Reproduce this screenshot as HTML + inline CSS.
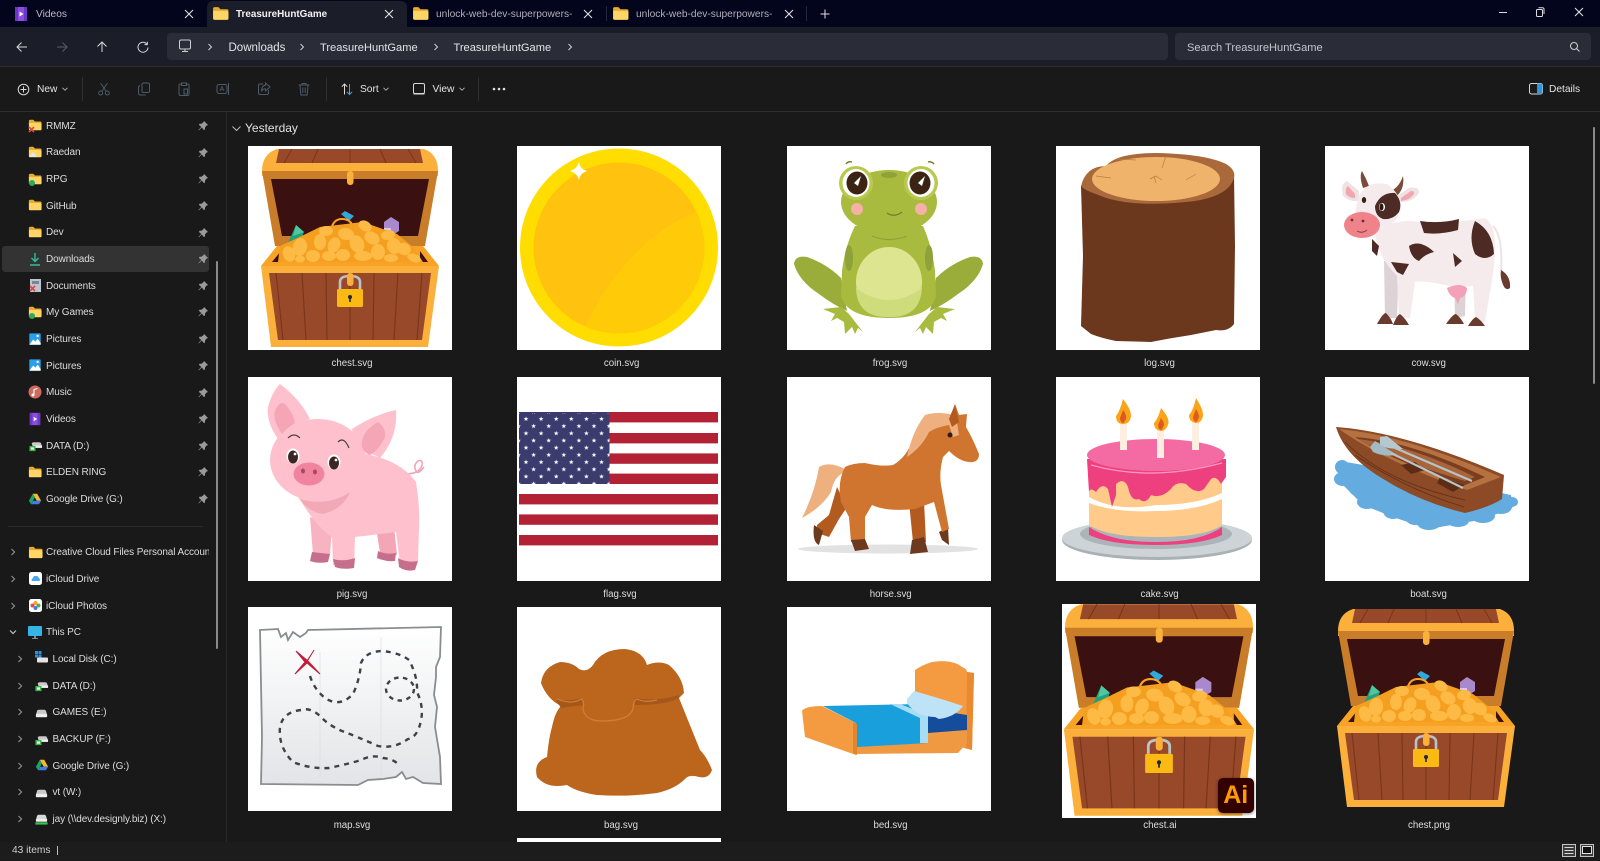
<!DOCTYPE html>
<html><head><meta charset="utf-8"><title>TreasureHuntGame</title>
<style>
html,body{margin:0;padding:0;width:1600px;height:860px;overflow:hidden;background:#191919;font-family:"Liberation Sans",sans-serif;color:#e4e4e4}
.a{position:absolute}
.t{position:absolute;white-space:nowrap;font-size:11px;line-height:20px;height:20px}
.s{position:absolute;white-space:nowrap;font-size:10px;letter-spacing:-.1px;line-height:26px;height:26px;color:#dcdcdc;margin-top:1px}
.l{position:absolute;width:204px;text-align:center;font-size:9.7px;line-height:16px;color:#dedede;margin-top:2px}
.c{position:absolute;width:204px;height:204px;background:#fff;overflow:hidden}
.c svg{display:block}
.i{position:absolute;overflow:visible}
.p{position:absolute;left:197px;width:12px;height:12px;overflow:visible}
</style></head>
<body>
<svg width="0" height="0" style="position:absolute">
<defs>
<symbol id="folder" viewBox="0 0 16 16"><path d="M1 3.5Q1 2 2.5 2H6L8 4H14Q15.5 4 15.5 5.5V6H1Z" fill="#e8a92e"/><path d="M1 5.5H14Q15.5 5.5 15.5 7V12.5Q15.5 14 14 14H2.5Q1 14 1 12.5Z" fill="#ffd666"/></symbol>
<symbol id="pin" viewBox="0 0 12 12"><path d="M7 1L11 5L9.5 5.6L8 7.5L8 9.5L6.8 10L4.8 7.5L1.8 10.4L1.4 10L4.3 7L2 5L2.4 3.8L4.4 3.8L6.4 2.3Z" fill="#9a9a9a"/></symbol>
<symbol id="video" viewBox="0 0 16 16"><rect x="2" y="1" width="12" height="14" rx="1" fill="#8a4fe0"/><rect x="2" y="1" width="3" height="14" fill="#6f36c4"/><rect x="11" y="1" width="3" height="14" fill="#6f36c4"/><path d="M6.5 5.5L10.5 8L6.5 10.5Z" fill="#fff"/></symbol>
<symbol id="pics" viewBox="0 0 16 16"><rect x="1.5" y="1.5" width="13" height="13" rx="1" fill="#2b9fe8"/><path d="M1.5 14.5L6 8.5L8.5 11L11 7.5L14.5 12.5V14.5Z" fill="#fff"/><circle cx="11" cy="4.5" r="1.4" fill="#fff"/></symbol>
<symbol id="drive" viewBox="0 0 16 16"><path d="M5.5 2H10.5L15 10H10Z" fill="#f7bb2a"/><path d="M5.5 2L1 10L3.5 14L8 6Z" fill="#1fa463"/><path d="M3.5 14H12.5L15 10H6Z" fill="#3f7ee8"/></symbol>
<symbol id="disk" viewBox="0 0 16 16"><path d="M3 7Q3.5 5 5 5H11Q12.5 5 13 7L14 10.5H2Z" fill="#c9c9c9"/><rect x="2" y="9.5" width="12" height="3.5" rx="1" fill="#efefef"/></symbol>
<symbol id="gdisk" viewBox="0 0 16 16"><path d="M4 6Q4.5 4.5 6 4.5H12Q13.5 4.5 14 6L15 9H5Z" fill="#c9c9c9"/><rect x="6" y="8" width="9" height="2.6" fill="#eee"/><rect x="1.5" y="8.5" width="6.5" height="5.5" fill="#37b24d"/><rect x="3" y="10" width="3.5" height="2.5" fill="#dff5e3"/></symbol>
<symbol id="net" viewBox="0 0 16 16"><path d="M3 6Q3.5 4 5 4H11Q12.5 4 13 6L14 9.5H2Z" fill="#d7d7d7"/><rect x="2" y="8.5" width="12" height="3" rx="1" fill="#eee"/><rect x="1.5" y="12" width="13" height="2.5" fill="#35c24d"/></symbol>
<symbol id="chev" viewBox="0 0 8 8"><path d="M2.5 1L5.5 4L2.5 7" fill="none" stroke="#d0d0d0" stroke-width="1"/></symbol>
<symbol id="schev" viewBox="0 0 8 8"><path d="M2.5 1L5.5 4L2.5 7" fill="none" stroke="#8c8c8c" stroke-width="1.2"/></symbol>
<symbol id="dn" viewBox="0 0 8 8"><path d="M1.5 2.8L4 5.3L6.5 2.8" fill="none" stroke="#b5b5b5" stroke-width="0.9"/></symbol>
<symbol id="x" viewBox="0 0 10 10"><path d="M1 1L9 9M9 1L1 9" fill="none" stroke="#e8e8e8" stroke-width="1"/></symbol>
<pattern id="stars" x="1.5" y="37.5" width="15.1" height="14.4" patternUnits="userSpaceOnUse"><polygon points="7.5,2 8.1,3.6 9.9,3.6 8.5,4.7 9,6.4 7.5,5.4 6,6.4 6.5,4.7 5.1,3.6 6.9,3.6" fill="#fff"/><polygon points="15.1,9.2 15.7,10.8 17.5,10.8 16.1,11.9 16.6,13.6 15.1,12.6 13.6,13.6 14.1,11.9 12.7,10.8 14.5,10.8" fill="#fff"/><polygon points="0,9.2 .6,10.8 2.4,10.8 1,11.9 1.5,13.6 0,12.6 -1.5,13.6 -1,11.9 -2.4,10.8 -.6,10.8" fill="#fff"/></pattern>
<clipPath id="coinclip"><circle cx="102" cy="102" r="85.5"/></clipPath>
<symbol id="chest" viewBox="0 0 204 204" overflow="visible">
<path d="M14 25Q14 8 29 3H176Q190 8 190 25V30H14Z" fill="#fbb03b"/>
<path d="M28 17L31 3H172L175 17Z" fill="#97492a"/>
<path d="M44 3L36 17M70 3L64 17M102 3V17M132 3L138 17M160 3L168 17" stroke="#7a3519" stroke-width="1"/>
<path d="M14 25H190L177 100H27Z" fill="#c97d29"/>
<path d="M23 33H181L170 90H34Z" fill="#3a1010"/>
<rect x="99" y="25" width="6.5" height="14" rx="3" fill="#fbb03b"/>
<path d="M29 100H175L191 120H13Z" fill="#f9a326"/>
<path d="M33 105L24 116H32ZM172 105L180 116H172Z" fill="#3a1010"/>
<path d="M40 97L48 79L56 86L50 102L40 104Z" fill="#21a27a"/><path d="M45 90L48 79L56 86Z" fill="#4fc7a2"/>
<path d="M136 76L143 71L151 76L151 85L143 90L136 85Z" fill="#a988cc"/><path d="M136 82L143 82L143 90L136 85Z" fill="#d9c8ea"/>
<path d="M93 68L97 65L106 70L101 75Z" fill="#2fa9dc"/>
<path d="M83 84Q85 73 94 73Q104 73 106 84" fill="none" stroke="#f9a326" stroke-width="2"/>
<path d="M32 100Q50 92 72 81L115 76L149 88L165 101L175 116H30Z" fill="#f59f20"/>
<g fill="#fdbb45">
<ellipse cx="41" cy="108" rx="6" ry="8" transform="rotate(-20 41 108)"/><ellipse cx="52" cy="101" rx="7" ry="9" transform="rotate(10 52 101)"/><ellipse cx="65" cy="110" rx="7" ry="6"/><ellipse cx="72" cy="96" rx="6" ry="8"/><ellipse cx="78" cy="85" rx="7" ry="5"/><ellipse cx="81" cy="110" rx="7" ry="5"/><ellipse cx="86" cy="99" rx="6" ry="8" transform="rotate(25 86 99)"/><ellipse cx="95" cy="109" rx="7" ry="6"/><ellipse cx="98" cy="88" rx="8" ry="6" transform="rotate(10 98 88)"/><ellipse cx="109" cy="98" rx="7" ry="9" transform="rotate(-25 109 98)"/><ellipse cx="117" cy="80" rx="7" ry="5" transform="rotate(30 117 80)"/><ellipse cx="124" cy="92" rx="8" ry="6" transform="rotate(30 124 92)"/><ellipse cx="115" cy="110" rx="9" ry="5"/><ellipse cx="130" cy="106" rx="7" ry="8"/><ellipse cx="140" cy="89" rx="7" ry="5" transform="rotate(-10 140 89)"/><ellipse cx="146" cy="100" rx="7" ry="8" transform="rotate(-15 146 100)"/><ellipse cx="156" cy="103" rx="7" ry="6" transform="rotate(30 156 103)"/><ellipse cx="143" cy="112" rx="7" ry="4"/><ellipse cx="166" cy="112" rx="7" ry="4" transform="rotate(20 166 112)"/><ellipse cx="52" cy="113" rx="5" ry="3.5"/>
</g>
<path d="M13 120H191L180 201H23Z" fill="#fbb03b"/>
<path d="M21 127H183L174 194H30Z" fill="#97492a"/>
<path d="M28 127L35 194M54 127L58 194M78 127L79 194M102 127V194M126 127L125 194M150 127L146 194M174 127L169 194" stroke="#7a3519" stroke-width="1.1"/>
<path d="M92 143V136Q92 130 102 130Q112 130 112 136V143" fill="none" stroke="#bcc2c9" stroke-width="2.6"/>
<rect x="99" y="127" width="6.5" height="13" rx="3" fill="#fbb03b"/>
<rect x="89" y="143" width="26" height="18" rx="1.5" fill="#fbb914"/>
<circle cx="102" cy="151" r="2" fill="#26262e"/><rect x="101.2" y="151" width="1.6" height="5" fill="#26262e"/>
</symbol>
</defs>
</svg>

<!-- tab bar -->
<div class="a" style="left:0;top:0;width:1600px;height:27px;background:#02051b"></div>
<div class="a" style="left:207px;top:1px;width:200px;height:26px;background:#1b1e29;border-radius:6px 6px 0 0"></div>
<svg class="i" style="left:13px;top:6px" width="16" height="16"><use href="#video"/></svg>
<div class="t" style="left:36px;top:5px;color:#bdbdc4;font-size:10.2px">Videos</div>
<svg class="i" style="left:184px;top:9px" width="10" height="10"><use href="#x"/></svg>
<svg class="i" style="left:212px;top:5px" width="17" height="17"><use href="#folder"/></svg>
<div class="t" style="left:236px;top:5px;font-weight:bold;font-size:9.9px;color:#f2f2f2">TreasureHuntGame</div>
<svg class="i" style="left:384px;top:9px" width="10" height="10"><use href="#x"/></svg>
<svg class="i" style="left:412px;top:5px" width="17" height="17"><use href="#folder"/></svg>
<div class="t" style="left:436px;top:5px;color:#aeb0b8;font-size:10.2px;width:136px;overflow:hidden">unlock-web-dev-superpowers-</div>
<svg class="i" style="left:583px;top:9px" width="10" height="10"><use href="#x"/></svg>
<div class="a" style="left:606px;top:6px;width:1px;height:15px;background:#24263a"></div>
<svg class="i" style="left:612px;top:5px" width="17" height="17"><use href="#folder"/></svg>
<div class="t" style="left:636px;top:5px;color:#aeb0b8;font-size:10.2px;width:136px;overflow:hidden">unlock-web-dev-superpowers-</div>
<svg class="i" style="left:784px;top:9px" width="10" height="10"><use href="#x"/></svg>
<div class="a" style="left:806px;top:6px;width:1px;height:15px;background:#24263a"></div>
<svg class="i" style="left:820px;top:9px" width="10" height="10"><path d="M5 .5V9.5M.5 5H9.5" stroke="#e0e0e0" fill="none"/></svg>
<svg class="i" style="left:1498px;top:7px" width="10" height="10"><path d="M1 5.5H9" stroke="#dcdcdc" stroke-width="1" fill="none"/></svg>
<svg class="i" style="left:1535px;top:7px" width="10" height="10"><rect x="1.5" y="2.5" width="6" height="7" rx="1" fill="none" stroke="#dcdcdc"/><path d="M3.5 .7H7.5Q9 .7 9 2V7" fill="none" stroke="#dcdcdc"/></svg>
<svg class="i" style="left:1574px;top:7px" width="10" height="10"><use href="#x"/></svg>

<!-- nav -->
<div class="a" style="left:0;top:27px;width:1600px;height:39px;background:#1b1e29"></div>
<div class="a" style="left:0;top:66px;width:1600px;height:1px;background:#2e2e2e"></div>
<div class="a" style="left:167px;top:33px;width:1001px;height:27px;background:#2a2d38;border-radius:4px"></div>
<div class="a" style="left:1175px;top:33px;width:416px;height:27px;background:#2a2d38;border-radius:4px"></div>
<svg class="i" style="left:16px;top:41px" width="12" height="12"><path d="M11 6H1M5.5 1.5L1 6L5.5 10.5" fill="none" stroke="#d8d8d8"/></svg>
<svg class="i" style="left:56px;top:41px" width="12" height="12"><path d="M1 6H11M6.5 1.5L11 6L6.5 10.5" fill="none" stroke="#5a5d66"/></svg>
<svg class="i" style="left:96px;top:41px" width="12" height="12"><path d="M6 11V1M1.5 5.5L6 1L10.5 5.5" fill="none" stroke="#d8d8d8"/></svg>
<svg class="i" style="left:137px;top:41px" width="12" height="12"><path d="M10 3.2A5 5 0 1 0 11 6.5M10.3 .8V3.6H7.5" fill="none" stroke="#d8d8d8"/></svg>
<svg class="i" style="left:178px;top:39px" width="14" height="14"><rect x="1.5" y="1" width="11" height="9" rx="1.5" fill="none" stroke="#d0d0d0"/><path d="M4 12.5H10M7 10V12.5" stroke="#d0d0d0" fill="none"/></svg>
<svg class="i" style="left:206px;top:43px" width="8" height="8"><use href="#chev"/></svg>
<div class="t" style="left:228.5px;top:37.5px;font-size:11.5px;color:#e4e4e6">Downloads</div>
<svg class="i" style="left:298px;top:43px" width="8" height="8"><use href="#chev"/></svg>
<div class="t" style="left:320px;top:37.5px;color:#e4e4e6;font-size:11.1px">TreasureHuntGame</div>
<svg class="i" style="left:432px;top:43px" width="8" height="8"><use href="#chev"/></svg>
<div class="t" style="left:453.5px;top:37.5px;color:#e4e4e6;font-size:11.1px">TreasureHuntGame</div>
<svg class="i" style="left:565.5px;top:43px" width="8" height="8"><use href="#chev"/></svg>
<div class="t" style="left:1187px;top:37.5px;color:#c4c5ca;font-size:11.1px">Search TreasureHuntGame</div>
<svg class="i" style="left:1569px;top:41px" width="12" height="12"><circle cx="5" cy="5" r="3.5" fill="none" stroke="#c8c8c8" stroke-width="1.1"/><path d="M7.5 7.5L10.5 10.5" stroke="#c8c8c8" stroke-width="1.1"/></svg>

<!-- toolbar -->
<div class="a" style="left:0;top:111px;width:1600px;height:1px;background:#2e2e2e"></div>
<svg class="i" style="left:17px;top:83px" width="13" height="13"><circle cx="6.5" cy="6.5" r="5.3" fill="none" stroke="#d8d8d8"/><path d="M6.5 3.5V9.5M3.5 6.5H9.5" stroke="#d8d8d8"/></svg>
<div class="t" style="left:37px;top:80px;font-size:10.2px">New</div>
<svg class="i" style="left:61px;top:85px" width="8" height="8"><use href="#dn"/></svg>
<div class="a" style="left:82px;top:77px;width:1px;height:24px;background:#2f2f2f"></div>
<svg class="i" style="left:97px;top:82px" width="14" height="14"><path d="M3.5 1L9 9M10.5 1L5 9" stroke="#4d5a68" fill="none"/><circle cx="3.7" cy="11" r="2" fill="none" stroke="#4d5a68"/><circle cx="10.3" cy="11" r="2" fill="none" stroke="#4d5a68"/></svg>
<svg class="i" style="left:137px;top:82px" width="14" height="14"><rect x="5" y="1" width="7.5" height="9.5" rx="1.5" fill="none" stroke="#4d5a68"/><path d="M3 3.5Q1.5 4 1.5 5.5V11Q1.5 13 3.5 13H8.5" fill="none" stroke="#4d5a68"/></svg>
<svg class="i" style="left:177px;top:82px" width="14" height="14"><rect x="2" y="2" width="10" height="11.5" rx="1.5" fill="none" stroke="#4d5a68"/><rect x="4.5" y="1" width="5" height="2.5" fill="#191919" stroke="#4d5a68"/><rect x="7" y="7" width="3.5" height="5" fill="none" stroke="#4d5a68"/></svg>
<svg class="i" style="left:216px;top:82px" width="14" height="14"><rect x="1" y="2.5" width="10" height="9" rx="2" fill="none" stroke="#4d5a68"/><path d="M12.5 1V13" stroke="#4d5a68"/><path d="M4 9L6 4.5L8 9M4.8 7.5H7.2" stroke="#4d5a68" fill="none" stroke-width=".8"/></svg>
<svg class="i" style="left:257px;top:82px" width="14" height="14"><path d="M6 2H3Q1.5 2 1.5 3.5V11Q1.5 12.5 3 12.5H10Q11.5 12.5 11.5 11V8" fill="none" stroke="#4d5a68"/><path d="M8.5 1L13 5L8.5 9V6.8Q5.5 6.8 4.5 9.5Q4.5 3.5 8.5 3.2Z" fill="none" stroke="#4d5a68"/></svg>
<svg class="i" style="left:297px;top:82px" width="14" height="14"><path d="M1.5 3H12.5M5 3V1.5H9V3M3 3L3.8 13H10.2L11 3M5.8 5.5V11M8.2 5.5V11" fill="none" stroke="#4d5a68"/></svg>
<div class="a" style="left:326px;top:77px;width:1px;height:24px;background:#2f2f2f"></div>
<svg class="i" style="left:341px;top:83px" width="12" height="12"><path d="M3.5 11.5V1M.8 3.7L3.5 1L6.2 3.7" fill="none" stroke="#dcdcdc"/><path d="M8.5 1V11.5M5.8 8.8L8.5 11.5L11.2 8.8" fill="none" stroke="#4aa3dd"/></svg>
<div class="t" style="left:360px;top:80px;font-size:10.2px">Sort</div>
<svg class="i" style="left:382px;top:85px" width="8" height="8"><use href="#dn"/></svg>
<svg class="i" style="left:412px;top:82px" width="14" height="14"><rect x="1.5" y="1.5" width="11" height="10" rx="1.5" fill="none" stroke="#d8d8d8"/><path d="M1.5 11.5H12.5V12.5H1.5Z" fill="#d8d8d8"/></svg>
<div class="t" style="left:432.5px;top:80px;font-size:10.2px">View</div>
<svg class="i" style="left:458px;top:85px" width="8" height="8"><use href="#dn"/></svg>
<div class="a" style="left:478px;top:77px;width:1px;height:24px;background:#2f2f2f"></div>
<svg class="i" style="left:492px;top:87px" width="14" height="4"><circle cx="2" cy="2" r="1.3" fill="#e0e0e0"/><circle cx="7" cy="2" r="1.3" fill="#e0e0e0"/><circle cx="12" cy="2" r="1.3" fill="#e0e0e0"/></svg>
<svg class="i" style="left:1529px;top:83px" width="14" height="12"><rect x=".5" y=".5" width="13" height="10.5" rx="2" fill="none" stroke="#d8d8d8"/><path d="M8 .5H11.5Q13.5 .5 13.5 2.5V9Q13.5 11 11.5 11H8Z" fill="#3296d4"/></svg>
<div class="t" style="left:1549px;top:80px;font-size:10.2px">Details</div>

<!-- sidebar -->
<div class="a" style="left:226px;top:112px;width:1px;height:730px;background:#292929"></div>
<div class="a" style="left:2px;top:246px;width:207px;height:26px;background:#333;border-radius:3px"></div>
<div class="a" style="left:216px;top:261px;width:2px;height:388px;background:#8a8a8a;border-radius:1px"></div>
<div class="a" style="left:8px;top:526px;width:195px;height:1px;background:#2b2b2b"></div>

<svg class="i" style="left:28px;top:118px" width="14" height="14"><use href="#folder"/><path d="M1 9L6 14M6 9L1 14" stroke="#e0463c" stroke-width="1.6"/></svg>
<div class="s" style="left:46px;top:113px">RMMZ</div><svg class="p" style="top:120px"><use href="#pin"/></svg>
<svg class="i" style="left:28px;top:145px" width="14" height="14"><use href="#folder"/><path d="M1 12L5 7L9 12Z" fill="#dfe7ef"/></svg>
<div class="s" style="left:46px;top:139px">Raedan</div><svg class="p" style="top:147px"><use href="#pin"/></svg>
<svg class="i" style="left:28px;top:172px" width="14" height="14"><use href="#folder"/><circle cx="4" cy="11" r="3" fill="#2eaa5a"/></svg>
<div class="s" style="left:46px;top:166px">RPG</div><svg class="p" style="top:173px"><use href="#pin"/></svg>
<svg class="i" style="left:28px;top:198px" width="14" height="14"><use href="#folder"/></svg>
<div class="s" style="left:46px;top:193px">GitHub</div><svg class="p" style="top:200px"><use href="#pin"/></svg>
<svg class="i" style="left:28px;top:225px" width="14" height="14"><use href="#folder"/></svg>
<div class="s" style="left:46px;top:219px">Dev</div><svg class="p" style="top:227px"><use href="#pin"/></svg>
<svg class="i" style="left:28px;top:252px" width="14" height="14"><path d="M7 1V9.5M3.5 6L7 9.5L10.5 6M2 13H12" fill="none" stroke="#2ebf9b" stroke-width="1.4"/></svg>
<div class="s" style="left:46px;top:246px">Downloads</div><svg class="p" style="top:253px"><use href="#pin"/></svg>
<svg class="i" style="left:28px;top:278px" width="14" height="14"><rect x="2" y="1" width="11" height="13" fill="#bcc4cf"/><rect x="4" y="3" width="7" height="3" fill="#7b8695"/><path d="M2 8L7 13M7 8L2 13" stroke="#e0463c" stroke-width="1.6"/></svg>
<div class="s" style="left:46px;top:273px">Documents</div><svg class="p" style="top:280px"><use href="#pin"/></svg>
<svg class="i" style="left:28px;top:305px" width="14" height="14"><use href="#folder"/><circle cx="4" cy="11" r="3" fill="#2eaa5a"/></svg>
<div class="s" style="left:46px;top:299px">My Games</div><svg class="p" style="top:306px"><use href="#pin"/></svg>
<svg class="i" style="left:28px;top:332px" width="14" height="14"><use href="#pics"/></svg>
<div class="s" style="left:46px;top:326px">Pictures</div><svg class="p" style="top:333px"><use href="#pin"/></svg>
<svg class="i" style="left:28px;top:358px" width="14" height="14"><use href="#pics"/></svg>
<div class="s" style="left:46px;top:353px">Pictures</div><svg class="p" style="top:360px"><use href="#pin"/></svg>
<svg class="i" style="left:28px;top:385px" width="14" height="14"><circle cx="7" cy="7" r="6.5" fill="#cf6a5e"/><path d="M6 10V4.5L9.5 3.5" fill="none" stroke="#fff" stroke-width="1.1"/><circle cx="5" cy="10" r="1.5" fill="#fff"/></svg>
<div class="s" style="left:46px;top:379px">Music</div><svg class="p" style="top:387px"><use href="#pin"/></svg>
<svg class="i" style="left:28px;top:412px" width="14" height="14"><use href="#video"/></svg>
<div class="s" style="left:46px;top:406px">Videos</div><svg class="p" style="top:413px"><use href="#pin"/></svg>
<svg class="i" style="left:28px;top:438px" width="15" height="15"><use href="#gdisk"/></svg>
<div class="s" style="left:46px;top:433px">DATA (D:)</div><svg class="p" style="top:440px"><use href="#pin"/></svg>
<svg class="i" style="left:28px;top:465px" width="14" height="14"><use href="#folder"/></svg>
<div class="s" style="left:46px;top:459px">ELDEN RING</div><svg class="p" style="top:466px"><use href="#pin"/></svg>
<svg class="i" style="left:28px;top:492px" width="14" height="14"><use href="#drive"/></svg>
<div class="s" style="left:46px;top:486px">Google Drive (G:)</div><svg class="p" style="top:493px"><use href="#pin"/></svg>

<svg class="i" style="left:9px;top:548px" width="8" height="8"><use href="#schev"/></svg>
<svg class="i" style="left:28px;top:545px" width="15" height="15"><use href="#folder"/></svg>
<div class="s" style="left:46px;top:539px;width:163px;overflow:hidden">Creative Cloud Files Personal Account</div>
<svg class="i" style="left:9px;top:575px" width="8" height="8"><use href="#schev"/></svg>
<svg class="i" style="left:29px;top:572px" width="13" height="13"><rect width="13" height="13" rx="2.5" fill="#fff"/><path d="M3 9Q1.8 7 3.8 6.2Q4.5 3.5 7 4Q9.5 4 9.8 6Q11.7 6.6 10.5 9Z" fill="#4aa8f0"/></svg>
<div class="s" style="left:46px;top:566px">iCloud Drive</div>
<svg class="i" style="left:9px;top:602px" width="8" height="8"><use href="#schev"/></svg>
<svg class="i" style="left:29px;top:599px" width="13" height="13"><rect width="13" height="13" rx="2.5" fill="#fff"/><circle cx="6.5" cy="4" r="2" fill="#f5a623"/><circle cx="9.5" cy="6.5" r="2" fill="#4caf50"/><circle cx="6.5" cy="9" r="2" fill="#3f7ee8"/><circle cx="3.5" cy="6.5" r="2" fill="#e5484d"/></svg>
<div class="s" style="left:46px;top:592.5px">iCloud Photos</div>
<svg class="i" style="left:9px;top:628px" width="8" height="8"><path d="M1 2.5L4 5.5L7 2.5" fill="none" stroke="#c0c0c0" stroke-width="1.2"/></svg>
<svg class="i" style="left:28px;top:625px" width="14" height="15"><rect y="1" width="14" height="10" rx="1" fill="#35b4e8"/><rect x="6" y="11" width="2" height="2" fill="#7d8b96"/><rect x="4" y="13" width="6" height="1" fill="#7d8b96"/></svg>
<div class="s" style="left:46px;top:619px">This PC</div>

<svg class="i" style="left:16px;top:655px" width="8" height="8"><use href="#schev"/></svg>
<svg class="i" style="left:35px;top:651px" width="14" height="14"><rect x="0" y="0" width="3" height="3" fill="#2d8fe0"/><rect x="3.5" y="0" width="3" height="3" fill="#2d8fe0"/><rect x="0" y="3.5" width="3" height="3" fill="#2d8fe0"/><rect x="3.5" y="3.5" width="3" height="3" fill="#2d8fe0"/><rect x="2" y="6.5" width="11" height="5" rx="1" fill="#e4e4e4"/></svg>
<div class="s" style="left:52.5px;top:646px">Local Disk (C:)</div>
<svg class="i" style="left:16px;top:682px" width="8" height="8"><use href="#schev"/></svg>
<svg class="i" style="left:34px;top:678px" width="15" height="15"><use href="#gdisk"/></svg>
<div class="s" style="left:52.5px;top:672.5px">DATA (D:)</div>
<svg class="i" style="left:16px;top:708px" width="8" height="8"><use href="#schev"/></svg>
<svg class="i" style="left:34px;top:705px" width="15" height="15"><use href="#disk"/></svg>
<div class="s" style="left:52.5px;top:699px">GAMES (E:)</div>
<svg class="i" style="left:16px;top:735px" width="8" height="8"><use href="#schev"/></svg>
<svg class="i" style="left:34px;top:732px" width="15" height="15"><use href="#gdisk"/></svg>
<div class="s" style="left:52.5px;top:726px">BACKUP (F:)</div>
<svg class="i" style="left:16px;top:762px" width="8" height="8"><use href="#schev"/></svg>
<svg class="i" style="left:35px;top:758px" width="14" height="14"><use href="#drive"/></svg>
<div class="s" style="left:52.5px;top:752.5px">Google Drive (G:)</div>
<svg class="i" style="left:16px;top:788px" width="8" height="8"><use href="#schev"/></svg>
<svg class="i" style="left:34px;top:785px" width="15" height="15"><use href="#disk"/></svg>
<div class="s" style="left:52.5px;top:779px">vt (W:)</div>
<svg class="i" style="left:16px;top:815px" width="8" height="8"><use href="#schev"/></svg>
<svg class="i" style="left:34px;top:811px" width="15" height="15"><use href="#net"/></svg>
<div class="s" style="left:52.5px;top:806px">jay (\\dev.designly.biz) (X:)</div>

<!-- content -->
<svg class="i" style="left:232px;top:124px" width="9" height="9"><path d="M.5 2.5L4.5 6.5L8.5 2.5" fill="none" stroke="#bbb"/></svg>
<div class="t" style="left:245px;top:118px;font-size:12px;color:#e2e2e2">Yesterday</div>
<div class="a" style="left:1593px;top:127px;width:2px;height:257px;background:#8a8a8a;border-radius:1px"></div>

<!-- chest -->
<div class="c" style="left:248px;top:146px"><svg width="204" height="204"><use href="#chest"/></svg></div>
<div class="l" style="left:250px;top:354px">chest.svg</div>

<!-- coin -->
<div class="c" style="left:517px;top:146px"><svg width="204" height="204" viewBox="0 0 204 204">
<circle cx="102" cy="101.5" r="99" fill="#ffdd00"/>
<circle cx="102" cy="102" r="85.5" fill="#ffc20f"/>
<path clip-path="url(#coinclip)" d="M179 66Q110 95 68 180L110 200L200 180L200 80Z" fill="#ffcb08"/>
<path d="M62 16Q63 23 70 25Q63 27 62 34Q60 27 53 25Q60 23 62 16Z" fill="#fff"/>
</svg></div>
<div class="l" style="left:519.7px;top:354px">coin.svg</div>

<!-- frog -->
<div class="c" style="left:786.5px;top:146px"><svg width="204" height="204" viewBox="0 0 204 204">
<path d="M7 118Q8 109 20 111Q40 118 54 132L60 165Q45 158 32 148Q12 135 7 118Z" fill="#9aad3a"/>
<path d="M196 118Q195 109 183 111Q163 118 149 132L143 165Q158 158 171 148Q191 135 196 118Z" fill="#9aad3a"/>
<path d="M36 163L54 161L62 168L76 186L71 182L68 188L65 181L58 188L57 176L50 172L44 175L48 168Z" fill="#a8bb3e"/>
<path d="M168 163L150 161L142 168L128 186L133 182L136 188L139 181L146 188L147 176L154 172L160 175L156 168Z" fill="#a8bb3e"/>
<path d="M68 80Q58 100 55 125L54 150Q60 172 102 172Q144 172 149 150L148 125Q145 100 136 80Z" fill="#a8bb3e"/>
<ellipse cx="102" cy="56" rx="48" ry="32" fill="#a8bb3e"/>
<ellipse cx="102" cy="136" rx="33" ry="35" fill="#dde591"/>
<path d="M69 142Q102 166 135 142Q133 172 102 171Q70 172 69 142Z" fill="#cfdc7b"/>
<ellipse cx="62" cy="112" rx="4" ry="13" fill="#8da23a"/><ellipse cx="142" cy="112" rx="4" ry="13" fill="#8da23a"/>
<ellipse cx="102" cy="29" rx="8" ry="3" fill="#8da23a"/>
<circle cx="69" cy="37" r="17" fill="#b9c94f"/><circle cx="134" cy="37" r="17" fill="#b9c94f"/>
<ellipse cx="69" cy="37" rx="13.5" ry="14" fill="#fff"/><ellipse cx="134" cy="37" rx="13.5" ry="14" fill="#fff"/>
<ellipse cx="70" cy="37" rx="10.5" ry="11.5" fill="#3c2415"/><ellipse cx="133" cy="37" rx="10.5" ry="11.5" fill="#3c2415"/>
<path d="M74 30L67 37L71 40Z" fill="#fff"/><path d="M138 30L131 37L135 40Z" fill="#fff"/>
<circle cx="70" cy="63" r="6" fill="#f5b0a8"/><circle cx="134" cy="63" r="6" fill="#f5b0a8"/>
<path d="M100 67Q107 72 115 66" fill="none" stroke="#6f7f2a" stroke-width="1.2"/>
<path d="M85 90Q102 97 120 90" fill="none" stroke="#8da23a" stroke-width="1.2"/>
<path d="M59 18Q61 15 65 16M141 16Q144 15 147 18" fill="none" stroke="#6f7f2a" stroke-width="1.4"/>
</svg></div>
<div class="l" style="left:788px;top:354px">frog.svg</div>

<!-- log -->
<div class="c" style="left:1056px;top:146px"><svg width="204" height="204" viewBox="0 0 204 204">
<path d="M25 40L178 28L179 100L178 178Q172 186 160 184L135 189Q115 192 95 196L60 195Q45 192 35 188L25 180L27 110Z" fill="#6b381d"/>
<path d="M25 40Q30 20 50 20Q60 7 100 7Q150 8 170 18Q180 24 178 32Q172 52 130 56Q70 62 40 48Q28 44 25 40Z" fill="#a9693b"/>
<ellipse cx="100" cy="33" rx="64" ry="22" fill="#f0b36b"/>
<path d="M98 30L100 37M100 30L94 33M100 30L106 34M110 10L106 22M55 32L40 30M140 28L130 34M60 13L80 14" stroke="#b5803f" stroke-width=".7" fill="none"/>
</svg></div>
<div class="l" style="left:1057.5px;top:354px">log.svg</div>

<!-- cow -->
<div class="c" style="left:1325px;top:146px"><svg width="204" height="204" viewBox="0 0 204 204">
<path d="M168 80Q178 90 176 125" fill="none" stroke="#f0e2e5" stroke-width="2"/>
<path d="M176 124Q186 130 185 142Q180 146 177 136Q175 130 176 124Z" fill="#6b3a2e"/>
<path d="M129 130H141L140 170L130 172Z" fill="#ddd2d5"/>
<path d="M59 115H74L72 172H60Z" fill="#ddd2d5"/>
<path d="M50 85Q70 72 95 76Q120 78 160 72Q170 78 170 100Q170 120 166 140L160 176L150 176L148 140Q130 142 110 137Q98 135 90 136L85 172L74 172L72 130Q52 110 50 85Z" fill="#f5ebed"/>
<path d="M95 75Q115 78 134 73L133 84Q115 89 99 87Z" fill="#4d2a24"/>
<path d="M150 75Q168 85 169 108Q160 116 150 108Q143 92 150 75Z" fill="#4d2a24"/>
<path d="M84 100Q95 93 109 106Q100 108 94 115Q86 112 84 100Z" fill="#4d2a24"/>
<path d="M66 116L84 118L78 129L72 126Z" fill="#4d2a24"/>
<path d="M128 107L137 115L130 121Z" fill="#4d2a24"/>
<path d="M47 93L54 100L52 110L47 105Z" fill="#4d2a24"/>
<path d="M122 142Q135 136 142 142Q142 150 135 152L133 158L130 152Q124 150 122 142Z" fill="#f3a0b8"/>
<path d="M34 45L22 35Q15 38 18 50Q25 56 34 55Z" fill="#efe2e5"/><path d="M30 48L23 40Q20 42 21 48Q24 52 30 52Z" fill="#f2a6ad"/>
<path d="M72 50L84 42Q93 40 94 46Q90 56 74 56Z" fill="#efe2e5"/><path d="M76 52L86 45Q90 45 89 48Q85 54 76 55Z" fill="#f2a6ad"/>
<path d="M38 42Q34 30 37 25Q41 32 44 40Z" fill="#7a4a3a"/><path d="M64 46Q74 42 78 30Q80 42 72 50Z" fill="#7a4a3a"/>
<path d="M34 50Q42 34 62 38Q76 48 76 62Q72 78 60 80L32 85Q28 65 34 50Z" fill="#f5ebed"/>
<path d="M50 60Q56 46 70 47Q78 56 74 66Q68 74 58 73Q50 70 50 60Z" fill="#4d2a24"/>
<ellipse cx="39" cy="54" rx="2.2" ry="3" fill="#332019"/><ellipse cx="57" cy="61" rx="3" ry="4" fill="#fff"/><ellipse cx="56.5" cy="61" rx="2" ry="3.5" fill="#2a1610"/>
<ellipse cx="37" cy="79" rx="18" ry="13" fill="#f0828a"/>
<circle cx="27" cy="74" r="1.4" fill="#6b2f33"/><circle cx="38" cy="75" r="1.4" fill="#6b2f33"/>
<path d="M32 85Q37 88 42 84" stroke="#8a3a40" fill="none"/>
<path d="M52 178Q58 167 61 167Q66 172 68 178ZM68 179Q72 169 75 168Q80 172 84 179ZM121 178Q128 168 131 168Q136 172 139 178ZM143 180Q148 172 151 171Q156 174 160 180Z" fill="#6b3a2e"/>
</svg></div>
<div class="l" style="left:1326.7px;top:354px">cow.svg</div>

<!-- pig -->
<div class="c" style="left:248px;top:377px"><svg width="204" height="204" viewBox="0 0 204 204">
<path d="M160 97Q172 96 174 88Q175 82 170 84Q165 88 168 94Q170 98 176 90" fill="none" stroke="#f4a6b7" stroke-width="1.6"/>
<path d="M62 140Q64 165 65 178L82 178L84 150Z" fill="#f8b3c2"/>
<path d="M128 150L132 176L149 178L145 140Z" fill="#f4a6b7"/>
<path d="M50 120Q55 75 105 75Q150 80 168 105Q172 130 171 150L170 184L152 186L148 155Q125 158 107 160L106 188L85 188L84 160Q70 150 60 135Z" fill="#fec0cd"/>
<ellipse cx="70" cy="83" rx="48" ry="41" fill="#fec0cd"/>
<path d="M30 62Q18 45 20 30Q24 15 32 7Q52 22 62 42Q48 46 36 60Z" fill="#fec0cd"/><path d="M34 57Q24 42 27 34Q32 22 38 28Q46 38 47 46Q40 50 34 57Z" fill="#f4a6b7"/>
<path d="M104 52Q125 38 148 33Q150 60 132 81Q124 76 112 75Q106 65 104 52Z" fill="#fec0cd"/><path d="M114 70Q112 55 130 45Q138 50 137 60Q132 72 122 78Q116 76 114 70Z" fill="#f4a6b7"/>
<path d="M52 122Q80 130 102 115Q95 132 75 137Q60 135 52 122Z" fill="#f1a9b8"/>
<ellipse cx="45" cy="79" rx="6.5" ry="7.5" fill="#fff"/><ellipse cx="45" cy="80" rx="5" ry="6.5" fill="#3a2724"/><circle cx="47" cy="77" r="1.4" fill="#fff"/>
<ellipse cx="86" cy="85" rx="6.5" ry="7.5" fill="#fff"/><ellipse cx="86" cy="86" rx="5" ry="6.5" fill="#3a2724"/><circle cx="88" cy="83" r="1.4" fill="#fff"/>
<ellipse cx="61" cy="97" rx="15.5" ry="11.5" fill="#f0839d"/><ellipse cx="55" cy="94" rx="2" ry="2.5" fill="#a84863"/><ellipse cx="67" cy="95" rx="2" ry="2.5" fill="#a84863"/>
<path d="M40 61Q46 55 52 61M90 65Q96 59 101 71" fill="none" stroke="#4c3a38" stroke-width="1.2"/>
<path d="M64 175Q72 176 82 177L80 185Q70 187 62 184ZM85 182Q95 185 107 181L106 191Q95 193 87 190ZM130 174Q138 178 148 176L147 184Q138 185 129 181ZM150 181Q158 186 170 184L167 193Q158 195 151 190Z" fill="#c66f8c"/>
</svg></div>
<div class="l" style="left:250px;top:585px">pig.svg</div>

<!-- flag -->
<div class="c" style="left:517px;top:377px"><svg width="204" height="204" viewBox="0 0 204 204">
<g fill="#b22234"><rect x="2" y="35" width="199" height="10.4"/><rect x="2" y="56" width="199" height="10.4"/><rect x="2" y="76.4" width="199" height="10.4"/><rect x="2" y="96.6" width="199" height="10.4"/><rect x="2" y="117" width="199" height="10.4"/><rect x="2" y="137.4" width="199" height="10.4"/><rect x="2" y="158" width="199" height="10.4"/></g>
<rect x="2" y="35" width="90.5" height="72" fill="#3c3b6e"/>
<rect x="2" y="36" width="90.5" height="71" fill="url(#stars)"/>
</svg></div>
<div class="l" style="left:518px;top:585px">flag.svg</div>

<!-- horse -->
<div class="c" style="left:786.5px;top:377px"><svg width="204" height="204" viewBox="0 0 204 204">
<ellipse cx="101" cy="172" rx="90" ry="4.5" fill="#e2e2e2"/>
<path d="M58 92Q42 84 32 90Q28 115 15 141Q35 130 44 115Q47 100 56 96Z" fill="#eeb07e"/>
<path d="M50 110L60 130L52 142L42 160L30 156L30 148L42 138Z" fill="#b35a1f"/>
<path d="M122 125L137 125L139 165L126 165Z" fill="#b35a1f"/>
<path d="M27 148L36 154L32 168Q25 165 27 148ZM125 163L137 160L141 175L123 177ZM152 155L161 150L162 168L155 163Z" fill="#6d3a1f"/>
<path d="M58 90Q66 86 78 86Q95 90 106 88Q120 80 126 62Q132 45 150 40L166 40L168 27L172 38L180 37L179 50Q186 62 192 77Q192 86 182 85Q172 84 162 74L156 80Q152 95 154 108L162 152L155 155L147 125L128 132Q100 135 85 128L78 140L78 165L64 165L62 140L54 125Q50 105 58 90Z" fill="#cf7530"/>
<path d="M64 163L78 162L82 172L68 174Z" fill="#6d3a1f"/>
<path d="M168 38Q150 34 138 38Q125 55 120 80Q135 70 142 55Q150 50 162 48L166 60L172 58L170 45Z" fill="#eeb07e"/>
<path d="M162 42L168 27L172 45L165 50Z" fill="#b35a1f"/>
<circle cx="163" cy="58" r="2.5" fill="#2f1c10"/>
</svg></div>
<div class="l" style="left:788.7px;top:585px">horse.svg</div>

<!-- cake -->
<div class="c" style="left:1056px;top:377px"><svg width="204" height="204" viewBox="0 0 204 204">
<ellipse cx="101" cy="163" rx="95" ry="20" fill="#a9b1b4"/>
<ellipse cx="101" cy="161" rx="95" ry="19" fill="#cdd3d6"/>
<ellipse cx="100" cy="157" rx="76" ry="15" fill="#abb4b8"/>
<path d="M33 88H166V148Q150 160 100 160Q50 160 33 148Z" fill="#ffca8a"/>
<path d="M33 150Q55 165 100 165Q145 165 166 150V158Q145 168 100 168Q55 168 33 158Z" fill="#ee3f7f"/>
<path d="M33 120Q60 135 100 128Q140 128 166 116V122Q140 134 100 134Q60 136 33 126Z" fill="#fff"/>
<path d="M31 82L170 82V100L165 107Q160 98 155 102L148 112Q140 118 130 107Q120 104 115 112Q105 122 95 118Q90 128 83 122Q75 125 72 110Q68 100 60 107L60 118L56 130L52 112Q46 105 40 115Q34 110 33 115Z" fill="#ee3f7f"/>
<ellipse cx="100" cy="78" rx="69" ry="16" fill="#f46ba4"/>
<path d="M35 88Q95 105 166 86" fill="none" stroke="#f69ac0" stroke-width="1.4"/>
<rect x="64" y="47" width="7" height="26" fill="#fdeee0"/><rect x="101" y="50" width="7" height="31" fill="#fdeee0"/><rect x="136" y="43" width="7" height="30" fill="#fdeee0"/>
<path d="M67 22Q75 32 75 39Q74 47 67 47Q60 47 60 39Q64 34 67 22Z" fill="#f9a51a"/><path d="M67 33Q71 38 70 42Q68 46 67 46Q64 45 64 41Z" fill="#e05a1e"/>
<path d="M105 31Q113 40 112.5 46Q110 54 105 54Q98 53 98 46Q102 42 105 31Z" fill="#f9a51a"/><path d="M105 41Q108 45 108 48Q106 53 105 53Q102 52 102 48Z" fill="#e05a1e"/>
<path d="M140 21Q147 32 147 38Q146 46 140 46Q133 45 133 38Q137 34 140 21Z" fill="#f9a51a"/><path d="M140 32Q143 37 143 40Q141 45 140 45Q137 44 137 40Z" fill="#e05a1e"/>
</svg></div>
<div class="l" style="left:1057.6px;top:585px">cake.svg</div>

<!-- boat -->
<div class="c" style="left:1325px;top:377px"><svg width="204" height="204" viewBox="0 0 204 204">
<g fill="#64acdf"><path d="M15 84L50 90L186 118L188 130L160 142L104 152L68 140L38 128L18 108Z"/><circle cx="17" cy="90" r="7"/><ellipse cx="18" cy="102" rx="9" ry="7"/><ellipse cx="33" cy="112" rx="9" ry="7"/><ellipse cx="42" cy="125" rx="10" ry="7"/><ellipse cx="68" cy="134" rx="10" ry="8"/><ellipse cx="90" cy="140" rx="10" ry="8"/><ellipse cx="104" cy="146" rx="12" ry="7"/><ellipse cx="133" cy="144" rx="11" ry="6"/><ellipse cx="158" cy="139" rx="12" ry="7"/><ellipse cx="176" cy="130" rx="11" ry="7"/><ellipse cx="187" cy="125" rx="6" ry="5"/></g>
<path d="M11 50Q80 55 179 98L177 122Q165 130 140 136Q95 125 60 103Q20 80 11 50Z" fill="#8c4a26"/>
<path d="M14 52Q80 58 176 100L142 113Q60 85 14 52Z" fill="#b5713f"/>
<path d="M30 60Q85 64 160 100L140 108Q70 85 30 60Z" fill="#7a3d1f"/>
<path d="M33 62Q85 68 150 100L140 104Q75 85 33 62Z" fill="#a8643a"/>
<path d="M20 65Q60 105 140 123M30 78Q80 112 139 130" fill="none" stroke="#5f2f17" stroke-width=".8"/>
<path d="M76 88L90 85L100 93L86 97ZM115 100L140 108L128 115L112 106Z" fill="#5c2d14"/>
<path d="M55 60L62 59L78 72Q60 72 55 68Z" fill="#b5c9d0"/>
<path d="M45 70L50 64L72 78Q58 80 48 75Z" fill="#a3bac2"/>
<path d="M70 71L147 104M66 76L138 111" stroke="#b7c4c9" stroke-width="2.2"/>
</svg></div>
<div class="l" style="left:1326.6px;top:585px">boat.svg</div>

<!-- map -->
<div class="c" style="left:248px;top:607px"><svg width="204" height="204" viewBox="0 0 204 204">
<defs><linearGradient id="mp" x1="0" y1="0" x2="0" y2="1"><stop offset="0" stop-color="#fff"/><stop offset="1" stop-color="#e2e4e7"/></linearGradient></defs>
<path d="M12 23L30 22L33 30L38 26L40 33L45 25L52 30L58 26L60 23L193 20L192 50L188 60L188 70L186 88L189 100L187 120L192 150L193 177L175 176L165 170L158 172L154 165L148 170L135 172L120 173L110 178L13 177L14 130Z" fill="url(#mp)" stroke="#8a8d90" stroke-width="1.8"/>
<path d="M72 45V170M133 30V170" stroke="#d9dbde" stroke-width=".6"/>
<path d="M62 69Q66 82 77 91Q92 101 105 87Q112 72 113 56Q118 44 135 44Q152 46 161 53Q170 70 169 85Q176 100 173 113Q170 130 160 132Q146 142 130 139Q110 130 94 124Q80 118 72 109Q62 100 53 103Q35 105 32 120Q30 140 45 155Q62 162 81 161Q100 157 113 153Q125 147 135 151Q145 152 150 157" fill="none" stroke="#3f4145" stroke-width="2.4" stroke-dasharray="5 5"/>
<ellipse cx="152" cy="82" rx="14" ry="11.5" fill="none" stroke="#3f4145" stroke-width="2.4" stroke-dasharray="4.5 4.5"/>
<path d="M48 44L60 54L72 67L59 56L47 67L57 55L48 44ZM66 43L60 53L54 60" fill="#c01f3a" stroke="#c01f3a" stroke-width="1"/>
</svg></div>
<div class="l" style="left:250px;top:816px">map.svg</div>

<!-- bag -->
<div class="c" style="left:517px;top:607px"><svg width="204" height="204" viewBox="0 0 204 204">
<path d="M24 76Q26 60 43 55Q55 55 62 62Q70 66 76 58Q85 42 108 42Q126 44 130 58Q142 53 152 58Q166 70 167 86L162 91L183 143Q190 150 195 163Q192 172 182 170Q172 167 168 172Q158 182 140 186Q110 190 80 188Q60 185 50 178Q30 182 20 170Q16 155 30 150Q32 130 35 120Q38 105 44 99Q30 92 24 76Z" fill="#bb661c"/>
<path d="M39 93Q55 94 64 91L66 98L44 101ZM118 91Q140 95 162 88L162 91Q150 98 118 98Z" fill="#a5561a"/>
<path d="M40 92Q55 98 64 92Q68 94 66 102Q68 114 85 114Q112 114 116 102Q116 94 120 92Q128 96 140 93" fill="none" stroke="#d17f35" stroke-width="1.2"/>
</svg></div>
<div class="l" style="left:519px;top:816px">bag.svg</div>
<div class="a" style="left:517px;top:838px;width:204px;height:4px;background:#fff"></div>

<!-- bed -->
<div class="c" style="left:786.5px;top:607px"><svg width="204" height="204" viewBox="0 0 204 204">
<path d="M128 63Q135 58 145 55Q165 52 175 60Q180 62 180 65L187 66L185 143L165 138L128 125Z" fill="#f49b42"/>
<path d="M180 65L187 66L185 143L179 141Z" fill="#e98a30"/>
<path d="M70 139L180 123V136L171 146L70 147Z" fill="#ef9a43"/>
<path d="M110 97L180 108V123L141 126L139 108Z" fill="#144d9c"/>
<path d="M36 99L132 97L141 109L141 136L70 140L69 116Z" fill="#19a0dc"/>
<path d="M103 97L113 97L141 108L141 136L133 136L133 111Z" fill="#a7dcf5"/>
<path d="M15 104Q18 99 35 99L69 116V148L18 130Z" fill="#f49b42"/>
<path d="M66 115L70 117V148L66 146Z" fill="#e08530"/>
<path d="M120 92L127 84L134 86Q155 92 176 99Q168 110 152 112L148 110Q130 110 120 96Z" fill="#bfe3f6"/>
</svg></div>
<div class="l" style="left:788.5px;top:816px">bed.svg</div>

<!-- chest.ai -->
<div class="a" style="left:1062px;top:604px;width:194px;height:214px;background:#fff;overflow:hidden"><svg style="position:absolute;left:-12px;top:-3px" width="218" height="218"><use href="#chest"/></svg></div>
<div class="a" style="left:1217.5px;top:778px;width:36.5px;height:35px;background:#330000;border-radius:5px;color:#ff9a00;font-weight:bold;font-size:25px;line-height:35px;text-align:center;box-shadow:0 1px 3px rgba(0,0,0,.5)">Ai</div>
<div class="l" style="left:1058px;top:816px">chest.ai</div>

<!-- chest.png -->
<svg class="a" style="left:1324px;top:606px" width="204" height="204"><use href="#chest"/></svg>
<div class="l" style="left:1327px;top:816px">chest.png</div>

<!-- status -->
<div class="a" style="left:0;top:842px;width:1600px;height:18px;background:#1c1c1c"></div>
<div class="t" style="left:12px;top:841px;font-size:10.2px;color:#cfcfcf">43 items</div>
<div class="a" style="left:57px;top:846px;width:1px;height:9px;background:#bdbdbd"></div>
<svg class="i" style="left:1562px;top:844px" width="14" height="13"><rect x=".5" y=".5" width="13" height="12" fill="#3a3a3a" stroke="#c4c4c4"/><path d="M2.5 3.5H11.5M2.5 6.5H11.5M2.5 9.5H11.5" stroke="#d8d8d8"/></svg>
<svg class="i" style="left:1580px;top:844px" width="14" height="13"><rect x=".5" y=".5" width="13" height="12" fill="#3a3a3a" stroke="#c4c4c4"/><rect x="2.5" y="2.5" width="9" height="7" fill="#111" stroke="#e0e0e0"/></svg>
</body></html>
